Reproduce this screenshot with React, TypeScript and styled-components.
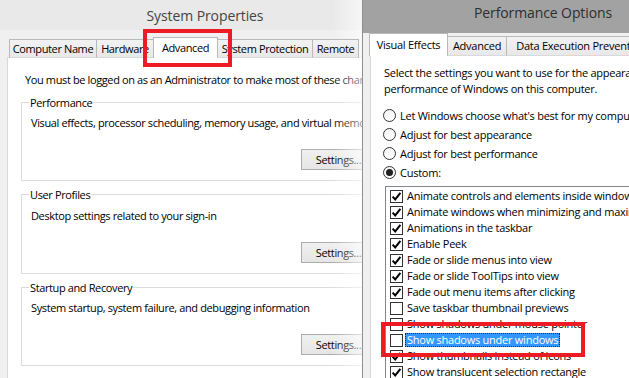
import React from "react";
import styled, { createGlobalStyle } from "styled-components";

const FONT = `"Open Sans", "Liberation Sans", sans-serif`;

const GlobalStyle = createGlobalStyle`
  html, body {
    margin: 0;
    padding: 0;
    background: #f0f0f0;
  }
  body {
    font-family: ${FONT};
    font-size: 11px;
    color: #000;
  }
`;

const Desktop = styled.div`
  position: relative;
  width: 629px;
  height: 378px;
  overflow: hidden;
  background: #f0f0f0;
`;

const Window = styled.div<{ $left: number; $width: number; $edge?: string; $track: number }>`
  position: absolute;
  top: 0;
  left: ${(p) => p.$left}px;
  width: ${(p) => p.$width}px;
  height: 420px;
  display: flex;
  flex-direction: column;
  background: #f0f0f0;
  letter-spacing: ${(p) => p.$track}px;
  border-left: ${(p) => (p.$edge ? `1px solid ${p.$edge}` : "none")};
`;

const TitleBar = styled.div<{ $bg: string; $color: string; $height: number; $lift: number }>`
  flex: none;
  box-sizing: border-box;
  height: ${(p) => p.$height}px;
  padding-bottom: ${(p) => p.$lift}px;
  display: flex;
  align-items: center;
  justify-content: center;
  background: ${(p) => p.$bg};
  color: ${(p) => p.$color};
  font-size: 14px;
  letter-spacing: -0.1px;
  white-space: nowrap;
`;

const Body = styled.div<{ $top: number; $side: number }>`
  flex: 1;
  min-height: 0;
  display: flex;
  flex-direction: column;
  padding: ${(p) => p.$top}px ${(p) => p.$side}px 0;
`;

const TabStrip = styled.div<{ $height: number; $indent: number }>`
  position: relative;
  z-index: 1;
  flex: none;
  display: flex;
  align-items: flex-end;
  height: ${(p) => p.$height}px;
  padding-left: ${(p) => p.$indent}px;
  margin-bottom: -1px;
`;

const Tab = styled.div<{ $width: number; $height: number; $active?: boolean }>`
  box-sizing: border-box;
  flex: none;
  width: ${(p) => p.$width}px;
  height: ${(p) => p.$height}px;
  margin-left: -1px;
  display: flex;
  align-items: center;
  justify-content: center;
  padding-bottom: ${(p) => (p.$active ? 2 : 1)}px;
  border: 1px solid #b9b9b9;
  border-bottom: ${(p) => (p.$active ? "none" : "1px solid #d9d9d9")};
  background: ${(p) => (p.$active ? "#fff" : "linear-gradient(#f2f2f2, #e8e8e8)")};
  white-space: nowrap;
  overflow: hidden;
`;

const Panel = styled.div<{ $pad: string }>`
  flex: 1;
  display: flex;
  flex-direction: column;
  padding: ${(p) => p.$pad};
  background: #fff;
  border: 1px solid #d9d9d9;
`;

const Line = styled.div<{ $indent?: number; $height?: number }>`
  margin-left: ${(p) => p.$indent ?? 0}px;
  line-height: ${(p) => p.$height ?? 15}px;
  white-space: nowrap;
`;

const Group = styled.fieldset<{ $gap: number }>`
  margin: ${(p) => p.$gap}px 0 0;
  padding: 5.5px 13px 10px 9px;
  border: 1px solid #dcdcdc;
  min-width: 0;
  display: flex;
  flex-direction: column;
`;

const Legend = styled.legend`
  margin-left: -2px;
  padding: 0 1px;
  line-height: 15px;
`;

const Button = styled.button`
  align-self: flex-end;
  margin-top: 19px;
  width: 75px;
  height: 21px;
  padding: 0;
  border: 1px solid #acacac;
  background: linear-gradient(#f0f0f0, #e5e5e5);
  font: inherit;
  letter-spacing: inherit;
  color: #000;
`;

const RadioList = styled.div`
  margin: 9px 0 0 -1px;
  display: flex;
  flex-direction: column;
`;

const RadioRow = styled.div`
  height: 19px;
  display: flex;
  align-items: center;
  gap: 4px;
  white-space: nowrap;
`;

const Radio = styled.span<{ $on?: boolean }>`
  box-sizing: border-box;
  flex: none;
  width: 13px;
  height: 13px;
  border: 1px solid #333;
  border-radius: 50%;
  background: linear-gradient(#f4f4f4, #fff);
  display: flex;
  align-items: center;
  justify-content: center;

  &::after {
    content: "";
    display: ${(p) => (p.$on ? "block" : "none")};
    width: 7px;
    height: 7px;
    border-radius: 50%;
    background: #1e1e1e;
  }
`;

const ListBox = styled.div`
  margin: 4px 0 0 1px;
  width: 340px;
  flex: 1;
  padding: 1px 0 0 4px;
  border: 1px solid #828790;
  background: #fff;
  display: flex;
  flex-direction: column;
`;

const Item = styled.div`
  height: 16px;
  display: flex;
  align-items: center;
  gap: 2px;
  white-space: nowrap;
`;

const Box = styled.span`
  box-sizing: border-box;
  flex: none;
  width: 13px;
  height: 13px;
  border: 1px solid #333;
  background: #fff;
  display: flex;
  align-items: center;
  justify-content: center;
`;

const ItemLabel = styled.span<{ $selected?: boolean }>`
  padding: 0 2px;
  line-height: 14px;
  background: ${(p) => (p.$selected ? "#3399ff" : "transparent")};
  color: ${(p) => (p.$selected ? "#fff" : "#000")};
  outline: ${(p) => (p.$selected ? "1px dotted #222" : "none")};
  outline-offset: -1px;
`;

const Glow = styled.div`
  position: absolute;
  top: 0;
  left: 332px;
  width: 30px;
  height: 378px;
  background: linear-gradient(to right, rgba(255, 255, 255, 0), rgba(255, 255, 255, 0.6));
  pointer-events: none;
`;

const Callout = styled.div<{ $x: number; $y: number; $w: number; $h: number }>`
  position: absolute;
  left: ${(p) => p.$x}px;
  top: ${(p) => p.$y}px;
  width: ${(p) => p.$w}px;
  height: ${(p) => p.$h}px;
  box-sizing: border-box;
  border: 4px solid #ed1c24;
  pointer-events: none;
  z-index: 5;
`;

const CheckMark = () => (
  <svg width="11" height="11" viewBox="0 0 11 11">
    <path d="M1.6 5.6 L4.2 8.4 L9.4 1.8" fill="none" stroke="#000" strokeWidth="2" />
  </svg>
);

const sysTabs = [
  { label: "Computer Name", w: 88 },
  { label: "Hardware", w: 58 },
  { label: "Advanced", w: 65, active: true },
  { label: "System Protection", w: 96 },
  { label: "Remote", w: 47 },
];

const groups = [
  { title: "Performance", text: "Visual effects, processor scheduling, memory usage, and virtual memory", gap: 7.5 },
  { title: "User Profiles", text: "Desktop settings related to your sign-in", gap: 6 },
  { title: "Startup and Recovery", text: "System startup, system failure, and debugging information", gap: 6 },
];

const perfTabs = [
  { label: "Visual Effects", w: 79, active: true },
  { label: "Advanced", w: 60 },
  { label: "Data Execution Prevention", w: 150 },
];

const radios = [
  { label: "Let Windows choose what's best for my computer" },
  { label: "Adjust for best appearance" },
  { label: "Adjust for best performance" },
  { label: "Custom:", on: true },
];

const effects = [
  { label: "Animate controls and elements inside windows", on: true },
  { label: "Animate windows when minimizing and maximizing", on: true },
  { label: "Animations in the taskbar", on: true },
  { label: "Enable Peek", on: true },
  { label: "Fade or slide menus into view", on: true },
  { label: "Fade or slide ToolTips into view", on: true },
  { label: "Fade out menu items after clicking", on: true },
  { label: "Save taskbar thumbnail previews", on: false },
  { label: "Show shadows under mouse pointer", on: false },
  { label: "Show shadows under windows", on: false, selected: true },
  { label: "Show thumbnails instead of icons", on: true },
  { label: "Show translucent selection rectangle", on: true },
];

export default function App() {
  return (
    <>
      <GlobalStyle />
      <Desktop>
        <Window $left={-1} $width={412} $track={-0.38}>
          <TitleBar $bg="#e9e9e9" $color="#444" $height={30} $lift={0}>
            System Properties
          </TitleBar>
          <Body $top={7} $side={8}>
            <TabStrip $height={21} $indent={3}>
              {sysTabs.map((t) => (
                <Tab key={t.label} $width={t.w} $height={t.active ? 21 : 19} $active={t.active}>
                  {t.label}
                </Tab>
              ))}
            </TabStrip>
            <Panel $pad="14px 12px 0 13px">
              <Line $indent={4}>You must be logged on as an Administrator to make most of these changes.</Line>
              {groups.map((g) => (
                <Group key={g.title} $gap={g.gap}>
                  <Legend>{g.title}</Legend>
                  <Line>{g.text}</Line>
                  <Button>Settings...</Button>
                </Group>
              ))}
            </Panel>
          </Body>
        </Window>

        <Glow />

        <Window $left={362} $width={360} $edge="#8f8f8f" $track={-0.25}>
          <TitleBar $bg="#a2a2a2" $color="#2e2e2e" $height={33} $lift={9}>
            Performance Options
          </TitleBar>
          <Body $top={0} $side={7}>
            <TabStrip $height={23} $indent={0}>
              {perfTabs.map((t) => (
                <Tab key={t.label} $width={t.w} $height={t.active ? 23 : 20} $active={t.active}>
                  {t.label}
                </Tab>
              ))}
            </TabStrip>
            <Panel $pad="9px 0 0 13px">
              <Line $height={16}>Select the settings you want to use for the appearance and</Line>
              <Line $height={16}>performance of Windows on this computer.</Line>
              <RadioList>
                {radios.map((r) => (
                  <RadioRow key={r.label}>
                    <Radio $on={r.on} />
                    {r.label}
                  </RadioRow>
                ))}
              </RadioList>
              <ListBox>
                {effects.map((e) => (
                  <Item key={e.label}>
                    <Box>{e.on && <CheckMark />}</Box>
                    <ItemLabel $selected={e.selected}>{e.label}</ItemLabel>
                  </Item>
                ))}
              </ListBox>
            </Panel>
          </Body>
        </Window>

        <Callout $x={143} $y={29} $w={89} $h={38} />
        <Callout $x={381} $y={322} $w={204} $h={35} />
      </Desktop>
    </>
  );
}
